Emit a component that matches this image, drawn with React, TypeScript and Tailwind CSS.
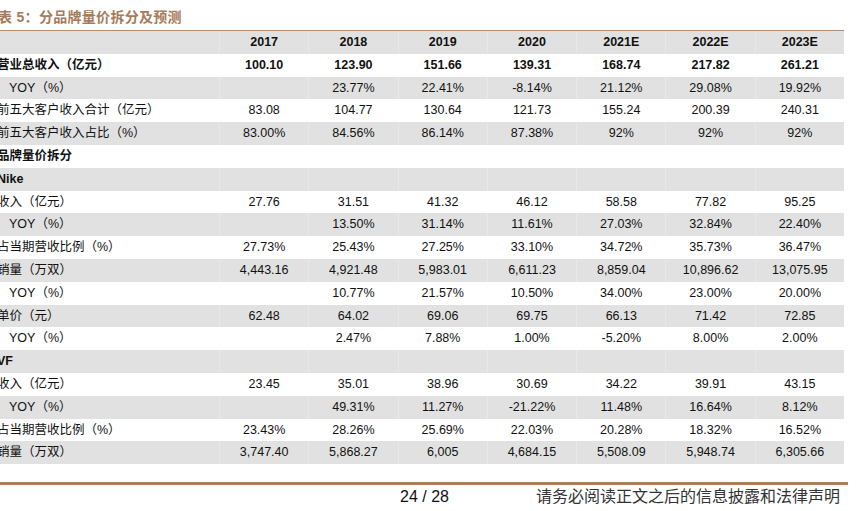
import React from "react";

type Row = { label: string; vals?: string[]; bold?: boolean; labelBold?: boolean; indent?: boolean };

const rows: Row[] = [
  { label: "", vals: ["2017", "2018", "2019", "2020", "2021E", "2022E", "2023E"], bold: true },
  { label: "营业总收入（亿元）", vals: ["100.10", "123.90", "151.66", "139.31", "168.74", "217.82", "261.21"], bold: true, labelBold: true },
  { label: "YOY（%）", vals: ["", "23.77%", "22.41%", "-8.14%", "21.12%", "29.08%", "19.92%"], indent: true },
  { label: "前五大客户收入合计（亿元）", vals: ["83.08", "104.77", "130.64", "121.73", "155.24", "200.39", "240.31"] },
  { label: "前五大客户收入占比（%）", vals: ["83.00%", "84.56%", "86.14%", "87.38%", "92%", "92%", "92%"] },
  { label: "品牌量价拆分", labelBold: true },
  { label: "Nike", labelBold: true },
  { label: "收入（亿元）", vals: ["27.76", "31.51", "41.32", "46.12", "58.58", "77.82", "95.25"] },
  { label: "YOY（%）", vals: ["", "13.50%", "31.14%", "11.61%", "27.03%", "32.84%", "22.40%"], indent: true },
  { label: "占当期营收比例（%）", vals: ["27.73%", "25.43%", "27.25%", "33.10%", "34.72%", "35.73%", "36.47%"] },
  { label: "销量（万双）", vals: ["4,443.16", "4,921.48", "5,983.01", "6,611.23", "8,859.04", "10,896.62", "13,075.95"] },
  { label: "YOY（%）", vals: ["", "10.77%", "21.57%", "10.50%", "34.00%", "23.00%", "20.00%"], indent: true },
  { label: "单价（元）", vals: ["62.48", "64.02", "69.06", "69.75", "66.13", "71.42", "72.85"] },
  { label: "YOY（%）", vals: ["", "2.47%", "7.88%", "1.00%", "-5.20%", "8.00%", "2.00%"], indent: true },
  { label: "VF", labelBold: true },
  { label: "收入（亿元）", vals: ["23.45", "35.01", "38.96", "30.69", "34.22", "39.91", "43.15"] },
  { label: "YOY（%）", vals: ["", "49.31%", "11.27%", "-21.22%", "11.48%", "16.64%", "8.12%"], indent: true },
  { label: "占当期营收比例（%）", vals: ["23.43%", "28.26%", "25.69%", "22.03%", "20.28%", "18.32%", "16.52%"] },
  { label: "销量（万双）", vals: ["3,747.40", "5,868.27", "6,005", "4,684.15", "5,508.09", "5,948.74", "6,305.66"] },
];

const font = { fontFamily: '"Liberation Sans", "Noto Sans CJK SC", sans-serif' };

export default function App() {
  return (
    <div className="relative w-[860px] h-[511px] overflow-hidden bg-white text-[#111]" style={font}>
      <div className="h-[30px] pt-[7px] ml-[-2px] text-[14px] leading-[20px] font-bold tracking-[0.3px] text-[#a57b5a]">
        表 5：分品牌量价拆分及预测
      </div>
      <div className="ml-[-4px] w-[848px] border-t border-[#b08d70]">
        {rows.map((r, i) => {
          const gray = i % 2 === 0;
          const vals = r.vals ?? ["", "", "", "", "", "", ""];
          return (
            <div
              key={i}
              className={`grid grid-cols-[223px_repeat(7,1fr)] h-[22.8px] items-stretch text-[12.5px] ${gray ? "bg-[#e1e1e1]" : "bg-white"}`}
            >
              <div
                className={`flex items-center whitespace-nowrap ${r.indent ? "pl-[13px]" : "pl-[1px]"} ${r.labelBold ? "font-bold" : ""}`}
              >
                {r.label}
              </div>
              {vals.map((v, j) => (
                <div
                  key={j}
                  className={`flex items-center justify-center border-l ${gray ? "border-[#e8e8e8]" : "border-white"} ${r.bold ? "font-bold" : ""}`}
                >
                  {v}
                </div>
              ))}
            </div>
          );
        })}
      </div>
      <div className="mt-[18px] h-[3px] w-[848px] bg-[#a88061]" />
      <div className="flex items-center h-[22px] mt-[1px]">
        <div className="ml-[400px] text-[16px] leading-[22px] text-[#111]">24 / 28</div>
        <div className="ml-[87px] text-[16px] leading-[22px] text-[#333]">请务必阅读正文之后的信息披露和法律声明</div>
      </div>
    </div>
  );
}
